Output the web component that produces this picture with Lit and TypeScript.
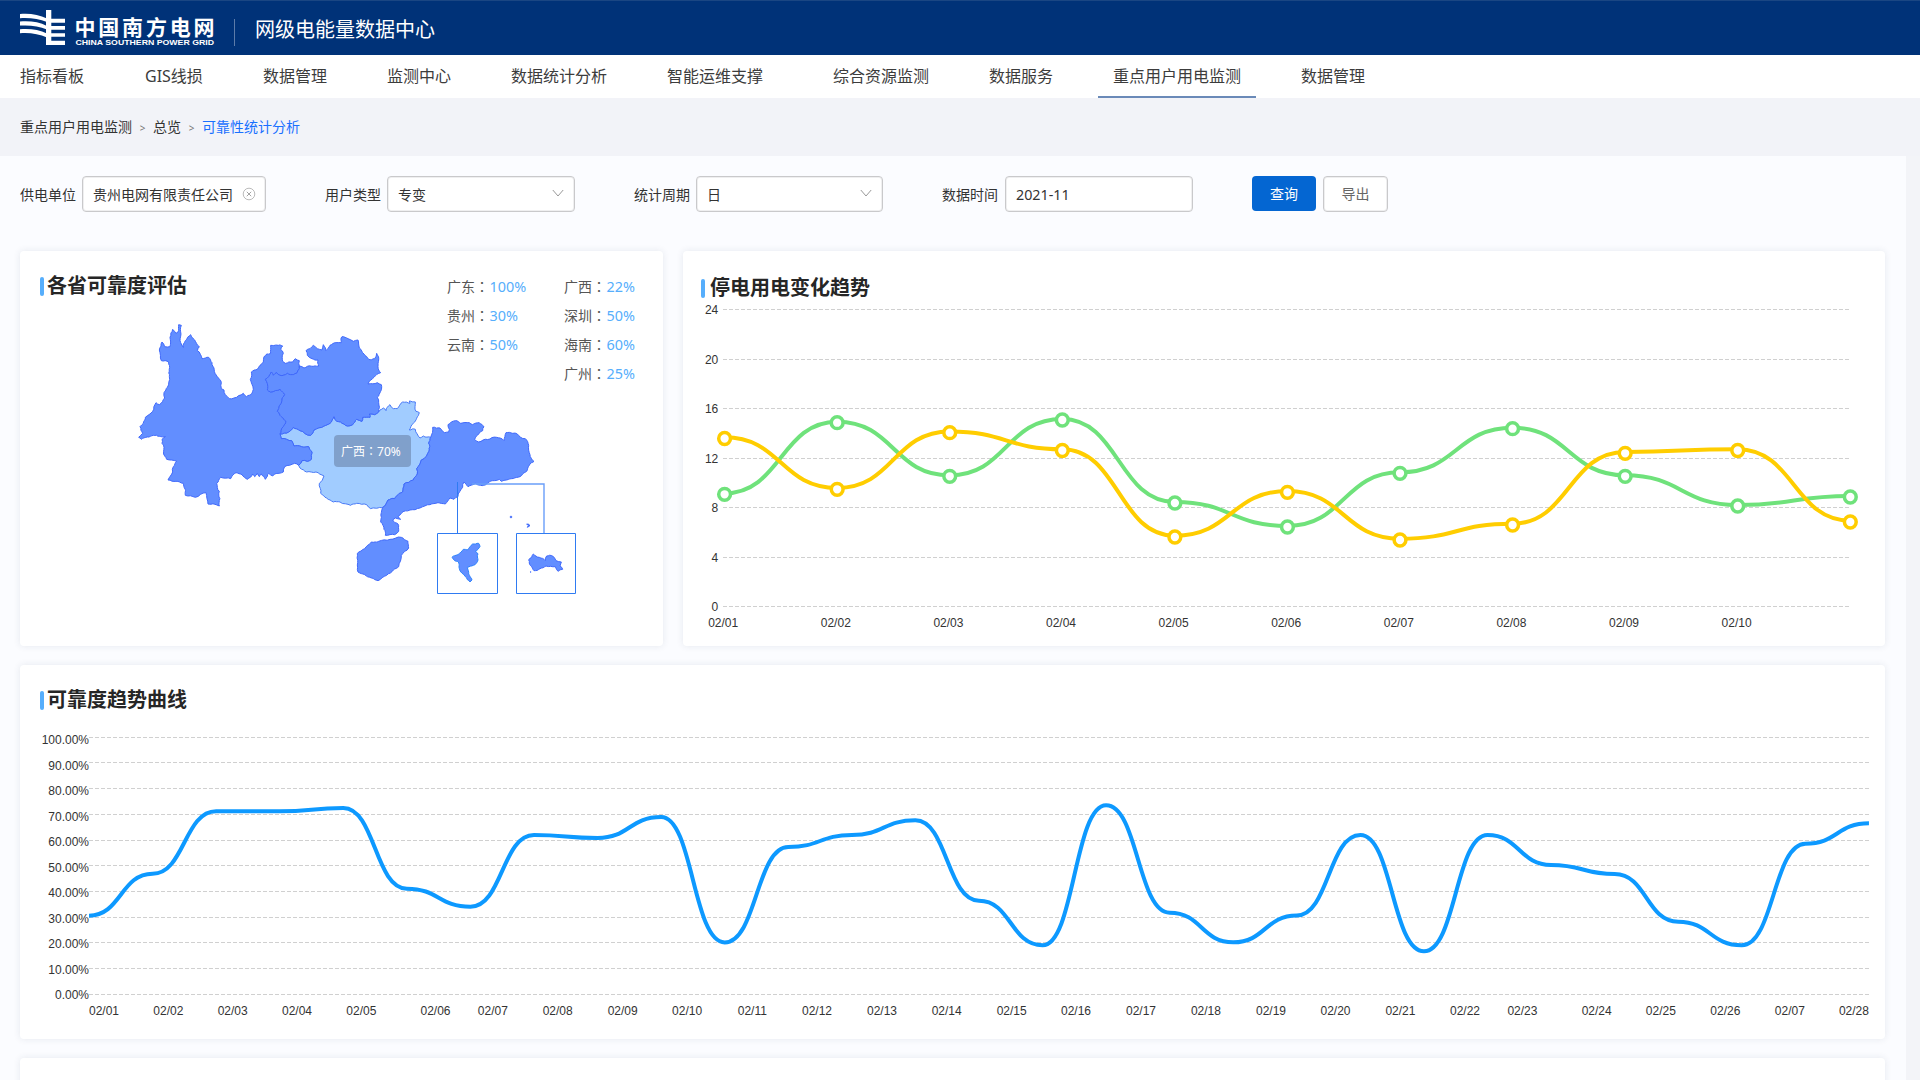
import { LitElement, html, svg, css } from "lit";
import { customElement } from "lit/decorators.js";

type Pt = [number, number];

/* ---------- map geometry (drawing units are a third of a pixel) ---------- */

const pts = (s: string, dx = 0, dy = 0): Pt[] =>
  s.trim().split(/\s+/).map((p) => {
    const [x, y] = p.split(",").map(Number);
    return [x + dx, y + dy] as Pt;
  });
const east = (s: string) => pts(s, 630, -180);
const rev = (a: Pt[]) => [...a].reverse();

const yunnanGuizhou = pts(
  "538,168 538,176 530,190 512,194 502,190 480,196 470,188 460,196 454,186 446,200 436,208 442,220 442,240 452,246 480,238 494,254 486,272 472,304 484,320 498,334 490,350 480,372"
);
const yunnanGuangxi = pts(
  "480,372 484,386 500,388 515,392 522,408 566,410 576,426 574,448 562,454 546,452 536,466"
);
const guizhouGuangxi = pts(
  "480,372 506,366 520,352 540,362 572,376 582,360 612,348 630,340 642,320 650,334 662,336 682,348 698,344 710,328 726,334 728,322 750,322 748,312 764,314 776,306"
);
const guangxiGuangdong = east(
  "302,562 296,580 298,600 288,620 274,630 270,642 260,656 262,672 250,690 222,702 218,726 200,738 194,746 174,750 158,772"
);

const yunnan: Pt[] = [
  ...pts(
    "184,46 182,98 190,112 196,92 212,74 224,90 238,110 232,122 246,146 266,142 276,158 292,200 304,218 304,236 312,240 316,254 328,266 342,264 370,250 380,260 396,250 400,238 391,208 394,186 412,178 430,156 432,140 440,132 452,130 452,106 488,108 482,118 490,130 488,154 496,160 518,156 526,146 538,152"
  ),
  ...yunnanGuizhou,
  ...yunnanGuangxi,
  ...pts(
    "524,460 494,470 490,486 464,492 458,498 446,490 436,508 424,492 418,500 412,490 404,500 398,492 382,508 366,494 348,488 332,506 302,502 290,520 298,544 298,588 282,582 264,582 258,548 226,562 196,556 190,520 168,514 144,510 158,486 160,470 170,454 140,448 134,438 132,412 126,400 126,388 136,380 100,376 64,388 56,382 68,370 60,350 70,340 76,322 98,304 108,278 118,284 134,264 132,248 142,232 148,200 146,156 124,152 118,120 126,96 134,110 150,110 150,82 158,58 168,70 174,66 176,44"
  ),
];

const guizhou: Pt[] = [
  ...pts(
    "552,174 596,168 594,150 576,146 562,136 558,122 580,106 592,116 606,120 610,104 618,122 630,106 648,98 664,98 666,80 684,86 700,94 714,90 718,114 732,132 746,148 764,146 770,130 776,150 774,170 782,188 762,202 744,222 772,218 784,224 782,244 772,262 776,278 776,306"
  ),
  ...rev(guizhouGuangxi),
  ...rev(yunnanGuizhou),
];

const guangxi: Pt[] = [
  ...guizhouGuangxi,
  ...pts("780,300 790,294 798,302 810,284 820,296 832,296 848,276 870,280"),
  ...east("238,453 256,456 258,484 268,488 250,520 238,540 256,538 270,564 280,558"),
  ...guangxiGuangdong,
  ...pts(
    "752,596 740,584 710,580 692,586 660,576 640,576 602,550 598,520 612,498 588,486 560,486 540,474"
  ),
  ...rev(yunnanGuangxi),
];

const guangdong: Pt[] = [
  ...east(
    "308,532 330,534 344,548 356,546 358,538 354,524 376,512 392,520 418,518 428,524 448,518 462,530 458,542 446,552 434,568 446,576 500,562 510,564 522,572 528,548 548,550 562,552 572,562 586,566 596,586 600,614 612,634 598,646 590,664 570,680 530,690 514,694 508,688 488,692 470,702 452,706 436,700 414,710 402,696 398,712 384,740 372,748 360,744 346,762 324,758 300,764 270,774 240,780 214,790 204,800 212,808 196,804 188,810 204,822 206,844 194,854 166,856 162,838 152,816 154,788"
  ),
  ...rev(guangxiGuangdong),
];

const hainan = east(
  "82,910 104,896 124,876 146,874 214,862 234,874 236,894 214,916 206,950 190,960 170,976 144,992 124,984 104,974 84,966"
);
const guangzhou = east(
  "366,922 384,914 400,898 412,900 428,882 446,880 450,890 436,904 444,912 444,930 430,946 412,952 416,972 426,990 420,996 406,980 388,956 384,934 374,932"
);
const shenzhen = east(
  "596,930 610,912 628,922 646,932 650,918 668,918 678,932 694,936 690,948 698,958 684,964 676,950 648,948 630,956 612,962"
);

/** Small repeatable offset so that shared borders wobble the same way. */
const noise = (x: number, y: number) => {
  const v = Math.sin(x * 12.9898 + y * 78.233) * 43758.5453;
  return (v - Math.floor(v)) * 2 - 1;
};

function jag(a: Pt, b: Pt, out: Pt[]) {
  const flip = a[0] > b[0] || (a[0] === b[0] && a[1] > b[1]);
  const [p, q] = flip ? [b, a] : [a, b];
  const len = Math.hypot(q[0] - p[0], q[1] - p[1]);
  if (len > 9) {
    const mx = (p[0] + q[0]) / 2;
    const my = (p[1] + q[1]) / 2;
    const k = (noise(mx, my) * Math.min(2.6, len * 0.13)) / len;
    const m: Pt = [mx - (q[1] - p[1]) * k, my + (q[0] - p[0]) * k];
    jag(a, m, out);
    jag(m, b, out);
  } else {
    out.push(b);
  }
}

function coast(points: Pt[]): string {
  const out: Pt[] = [points[0]];
  points.forEach((p, i) => jag(p, points[(i + 1) % points.length], out));
  return "M" + out.map(([x, y]) => `${x.toFixed(1)} ${y.toFixed(1)}`).join("L") + "Z";
}

/* ---------- chart helpers ---------- */

function flow(points: Pt[]): string {
  return points
    .map(([x, y], i) => {
      if (!i) return `M${x} ${y}`;
      const [px, py] = points[i - 1];
      const m = (px + x) / 2;
      return `C${m} ${py} ${m} ${y} ${x} ${y}`;
    })
    .join("");
}

const outageX = (i: number) => 724.6 + i * 112.57;
const green = [494.3, 422.7, 476.3, 420, 503, 527, 473.3, 428.7, 476.3, 506, 497];
const yellow = [438.5, 489.3, 432.7, 450.5, 537, 492.3, 540, 525, 453.3, 450.5, 522];

const reliability = [
  915.7, 873.7, 811.3, 811.3, 808, 888.7, 906.7, 835, 838, 817, 942.4, 847, 835, 820.3, 900.7,
  945.3, 805.3, 912.7, 942.3, 915.5, 835, 951.3, 835, 865, 874, 921.7, 945.3, 843.7, 823.3,
];
const dayLabels: [string, number][] = [
  ["02/01", 104], ["02/02", 168.3], ["02/03", 232.7], ["02/04", 297], ["02/05", 361.3],
  ["02/06", 435.5], ["02/07", 492.8], ["02/08", 557.7], ["02/09", 622.7], ["02/10", 687.1],
  ["02/11", 752.3], ["02/12", 817], ["02/13", 882], ["02/14", 946.7], ["02/15", 1011.7],
  ["02/16", 1076], ["02/17", 1141], ["02/18", 1205.9], ["02/19", 1271], ["02/20", 1335.5],
  ["02/21", 1400.4], ["02/22", 1465], ["02/23", 1522.4], ["02/24", 1596.7], ["02/25", 1660.8],
  ["02/26", 1725.3], ["02/07", 1789.8], ["02/28", 1853.9],
];
const percentY = [739.7, 765.7, 790.5, 816.7, 841.9, 867.7, 892.5, 918.5, 943.7, 969.7, 994.7];
const percentGrid = [737.5, 762.5, 788.5, 814.5, 840.5, 865.5, 891.5, 917.5, 942.5, 968.5, 994.5];
const outageGrid = [309.5, 359.5, 408.5, 458.5, 507.5, 557.5, 606.5];

const nav = [
  "指标看板", "GIS线损", "数据管理", "监测中心", "数据统计分析", "智能运维支撑",
  "综合资源监测", "数据服务", "重点用户用电监测", "数据管理",
];

const leftRates = [["广东", "100%"], ["贵州", "30%"], ["云南", "50%"]];
const rightRates = [["广西", "22%"], ["深圳", "50%"], ["海南", "60%"], ["广州", "25%"]];

@customElement("app-root")
export class AppRoot extends LitElement {
  static styles = css`
    :host {
      display: flex;
      flex-direction: column;
      width: 1920px;
      height: 1080px;
      overflow: hidden;
      background: #f3f4f8;
      color: #333;
      font-family: "Noto Sans", "Noto Sans CJK SC", sans-serif;
      font-size: 14px;
    }
    * { box-sizing: border-box; }
    svg { display: block; }
    .header {
      flex: none;
      display: flex;
      align-items: center;
      height: 55px;
      padding-left: 20px;
      background: #003278;
      border-top: 1px solid #1a4683;
      color: #fff;
    }
    .divider { width: 1px; height: 27px; margin: 8px 20px 0 19px; background: #5c7ba9; }
    .product { font-size: 20px; line-height: 30px; padding-top: 4px; white-space: nowrap; }
    .nav {
      flex: none;
      display: flex;
      height: 43px;
      padding-left: 5px;
      gap: 30px;
      background: #fff;
      color: #3c3c3c;
      font-size: 16px;
    }
    .nav-item {
      padding: 0 15px;
      line-height: 43px;
      height: 43px;
      white-space: nowrap;
      border-bottom: 2px solid transparent;
    }
    .nav-item.first { width: 95px; }
    .nav-item.latin { width: 88px; }
    .nav-item.wide-gap { margin-right: 10px; }
    .nav-item.active { border-bottom-color: #6a8ab8; }
    .crumbs {
      flex: none;
      display: flex;
      align-items: center;
      height: 58px;
      padding: 0 0 2px 20px;
      background: #f2f3f8;
    }
    .sep { width: 21px; text-align: center; font-size: 10px; color: #777; padding-top: 3px; }
    .current { color: #1970ff; }
    .content {
      flex: 1;
      min-height: 0;
      width: 1906px;
      padding: 20px 21px 0 20px;
      background: #fbfcff;
      display: flex;
      flex-direction: column;
    }
    .filters { flex: none; display: flex; height: 36px; margin-bottom: 39px; }
    .field { display: flex; align-items: center; }
    .field-unit { width: 305px; }
    .field-type { width: 309px; }
    .field-cycle { width: 308px; }
    .field-time { width: 310px; }
    .label { width: 62px; white-space: nowrap; }
    .field-time .label { width: 63px; }
    .box {
      display: flex;
      align-items: center;
      justify-content: space-between;
      width: 188px;
      height: 36px;
      padding: 0 9px 0 10px;
      border: 1px solid #c9c9cb;
      border-radius: 4px;
      box-shadow: inset 0 0 0 1px #efeff0;
      background: #fff;
      white-space: nowrap;
    }
    .field-unit .box { width: 184px; }
    .field-cycle .box { width: 187px; }
    .date { font-size: 14.3px; }
    .buttons { display: flex; gap: 7px; }
    .btn {
      width: 64px;
      height: 35px;
      line-height: 35px;
      text-align: center;
      border-radius: 4px;
      background: #0466d2;
      color: #fff;
    }
    .btn.plain {
      width: 65px;
      height: 36px;
      line-height: 33px;
      background: #fff;
      color: #666;
      border: 1px solid #c9c9cb;
      box-shadow: inset 0 0 0 1px #efeff0;
    }
    .card {
      background: #fff;
      border-radius: 4px;
      box-shadow: 0 0 7px rgba(40, 60, 90, 0.1);
    }
    .top { flex: none; display: flex; gap: 20px; height: 395px; margin-bottom: 19px; }
    .provinces { width: 643px; display: grid; }
    .provinces > * { grid-area: 1 / 1; }
    .outage { width: 1202px; display: flex; flex-direction: column; }
    .trend { flex: none; height: 374px; margin-bottom: 19px; display: flex; flex-direction: column; }
    .next { flex: none; height: 60px; }
    .title {
      display: flex;
      align-items: center;
      gap: 3px;
      height: 20px;
      margin: 25px 0 0 20px;
      font-size: 20px;
      line-height: 20px;
      font-weight: 700;
      color: #262626;
      white-space: nowrap;
    }
    .title::before {
      content: "";
      width: 4px;
      height: 19px;
      border-radius: 2px;
      background: #56aefc;
    }
    .outage .title { gap: 5px; margin: 27px 0 2px 18px; }
    .trend .title { margin-bottom: 10px; }
    .rates { display: flex; justify-content: flex-end; padding: 21px 28px 0 0; z-index: 1; }
    .rate-list { width: 117px; display: flex; flex-direction: column; }
    .rate-list.last { width: 71px; }
    .rate { height: 29px; line-height: 29px; color: #555; white-space: nowrap; }
    .rate-value { color: #56aefc; font-size: 14.4px; padding-left: 0.5px; }
    .colon { font-family: "Noto Sans CJK TC", sans-serif; }
    .tip {
      justify-self: start;
      margin: 184px 0 0 314px;
      width: 77px;
      height: 32px;
      line-height: 32px;
      padding-left: 7px;
      border-radius: 4px;
      background: #80a0cb;
      color: #fff;
      font-size: 12px;
      white-space: nowrap;
      z-index: 1;
    }
    .axis { font: 12px "Liberation Sans", Arial, sans-serif; fill: #333; }
    .mid { text-anchor: middle; }
    .end { text-anchor: end; }
    .grid { stroke: #d0d0d0; stroke-width: 1; stroke-dasharray: 4 2; }
    .line { fill: none; stroke-width: 4; }
    .line.g { stroke: #6fe27b; }
    .line.y { stroke: #ffcd00; }
    .line.b { stroke: #0d99ff; stroke-width: 4; }
    .dot { fill: #fff; stroke-width: 3.5; }
    .dot.g { stroke: #6fe27b; }
    .dot.y { stroke: #ffcd00; }
    .land { fill: #628eff; stroke: #3f68fa; stroke-width: 3; stroke-linejoin: round; }
    .land.hot { fill: #a1ccff; stroke: #4878f6; }
    .land.gz { stroke: #2f84fb; }
    .inset { fill: none; stroke: #2f7bf2; stroke-width: 1; }
    .inset.soft { stroke: #6a9ef9; stroke-width: 1.4; }
    .logo-cn { font: 700 21px "Noto Sans CJK SC", sans-serif; fill: #fff; }
    .logo-en { font: 700 7.2px "Liberation Sans", Arial, sans-serif; fill: #fff; }
  `;

  private logo() {
    return html`<svg width="195" height="54" viewBox="20 1 195 54">
      <g fill="#fff">
        <path d="M46 10H51.3V18.8H65V22.7H51.3V26H65V29.7H51.3V33.2H65V36.8H51.3V40.8H65V45H46Z" />
        <path d="M20 14C30 13.2 39 14.6 47 18.6V22C39 18.8 30 17.6 20 18.2Z" />
        <path d="M20 21.6C30 20.8 39 22 47 26V29.6C39 26.2 30 24.9 20 25.6Z" />
        <path d="M20 29.2C30 28.4 39 29.6 47 33.6V37.4C39 34 30 32.4 20 33.2Z" />
      </g>
      <text class="logo-cn" x="74.5" y="35.4" textLength="140" lengthAdjust="spacing">中国南方电网</text>
      <text class="logo-en" x="75.5" y="45" textLength="138.5" lengthAdjust="spacingAndGlyphs">CHINA SOUTHERN POWER GRID</text>
    </svg>`;
  }

  private chevron() {
    return html`<svg width="14" height="10" viewBox="0 0 14 10">
      <path d="M1.8 1L7 7L12.2 1" fill="none" stroke="#999" stroke-width="1" />
    </svg>`;
  }

  private rates(rows: string[][], cls = "") {
    return html`<div class="rate-list ${cls}">
      ${rows.map(
        ([name, value]) =>
          html`<div class="rate">${name}<span class="colon">：</span><span class="rate-value">${value}</span></div>`
      )}
    </div>`;
  }

  private map() {
    return html`<svg width="643" height="395" viewBox="20 251 643 395">
      <g transform="translate(120 310) scale(0.33333)">
        <path class="land hot" d=${coast(guangxi)} />
        <path class="land" d=${coast(yunnan)} />
        <path class="land" d=${coast(guizhou)} />
        <path class="land" d=${coast(guangdong)} />
        <path class="land" d=${coast(hainan)} />
        <path class="land gz" d=${coast(guangzhou)} />
        <path class="land" d=${coast(shenzhen)} />
        <circle class="land" cx="1173" cy="621" r="2.5" />
        <circle class="land" cx="1232" cy="786" r="1" />
        <path class="land" d="M1220 642L1227 643L1229 648L1222 652L1225 647Z" />
      </g>
      <path class="inset" d="M457.5 482V533.5M437.5 533.5H497.5V593.5H437.5ZM516.5 533.5H575.5V593.5H516.5Z" />
      <path class="inset soft" d="M472 484H544V533" />
    </svg>`;
  }

  private outageChart() {
    return html`<svg width="1202" height="346" viewBox="683 300 1202 346">
      ${outageGrid.map(
        (y, i) => svg`<line class="grid" x1="723" x2="1849" y1=${y} y2=${y} />
          <text class="axis end" x="718.3" y=${y + 4.8}>${24 - i * 4}</text>`
      )}
      ${Array.from(
        { length: 10 },
        (_, i) => svg`<text class="axis mid" x=${723.2 + i * 112.6} y="627">02/${String(i + 1).padStart(2, "0")}</text>`
      )}
      <path class="line g" d=${flow(green.map((y, i) => [outageX(i), y - 1] as Pt))} />
      <path class="line y" d=${flow(yellow.map((y, i) => [outageX(i), y - 1.3] as Pt))} />
      ${green.map((y, i) => svg`<circle class="dot g" cx=${outageX(i)} cy=${y} r="5.9" />`)}
      ${yellow.map((y, i) => svg`<circle class="dot y" cx=${outageX(i)} cy=${y} r="5.9" />`)}
    </svg>`;
  }

  private trendChart() {
    return html`<svg width="1865" height="318" viewBox="20 720 1865 318">
      ${percentGrid.map((y) => svg`<line class="grid" x1="89" x2="1869" y1=${y} y2=${y} />`)}
      ${percentY.map(
        (y, i) => svg`<text class="axis end" x="89" y=${y + 4.3}>${(100 - i * 10).toFixed(2)}%</text>`
      )}
      ${dayLabels.map(([t, x]) => svg`<text class="axis mid" x=${x} y="1015">${t}</text>`)}
      <path class="line b" d=${flow(reliability.map((y, i) => [89 + i * 63.57, y] as Pt))} />
    </svg>`;
  }

  render() {
    return html`
      <div class="header">
        ${this.logo()}
        <div class="divider"></div>
        <div class="product">网级电能量数据中心</div>
      </div>
      <div class="nav">
        ${nav.map(
          (t, i) =>
            html`<div class="nav-item ${["first", "latin", "", "", "", "wide-gap", "", "", "active"][i] ?? ""}">${t}</div>`
        )}
      </div>
      <div class="crumbs">
        <span>重点用户用电监测</span><span class="sep">&gt;</span><span>总览</span><span class="sep">&gt;</span
        ><span class="current">可靠性统计分析</span>
      </div>
      <div class="content">
        <div class="filters">
          <div class="field field-unit">
            <span class="label">供电单位</span>
            <div class="box">
              <span>贵州电网有限责任公司</span>
              <svg width="14" height="14" viewBox="0 0 14 14">
                <path d="M4.8 4.8L9.2 9.2M9.2 4.8L4.8 9.2" stroke="#999" stroke-width="0.9" />
                <circle cx="7" cy="7" r="5.8" fill="none" stroke="#aaa" stroke-width="0.8" />
              </svg>
            </div>
          </div>
          <div class="field field-type">
            <span class="label">用户类型</span>
            <div class="box"><span>专变</span>${this.chevron()}</div>
          </div>
          <div class="field field-cycle">
            <span class="label">统计周期</span>
            <div class="box"><span>日</span>${this.chevron()}</div>
          </div>
          <div class="field field-time">
            <span class="label">数据时间</span>
            <div class="box"><span class="date">2021-11</span></div>
          </div>
          <div class="buttons">
            <div class="btn">查询</div>
            <div class="btn plain">导出</div>
          </div>
        </div>
        <div class="top">
          <div class="card provinces">
            ${this.map()}
            <div class="title">各省可靠度评估</div>
            <div class="rates">${this.rates(leftRates)}${this.rates(rightRates, "last")}</div>
            <div class="tip">广西<span class="colon">：</span>70%</div>
          </div>
          <div class="card outage">
            <div class="title">停电用电变化趋势</div>
            ${this.outageChart()}
          </div>
        </div>
        <div class="card trend">
          <div class="title">可靠度趋势曲线</div>
          ${this.trendChart()}
        </div>
        <div class="card next"></div>
      </div>
    `;
  }
}
